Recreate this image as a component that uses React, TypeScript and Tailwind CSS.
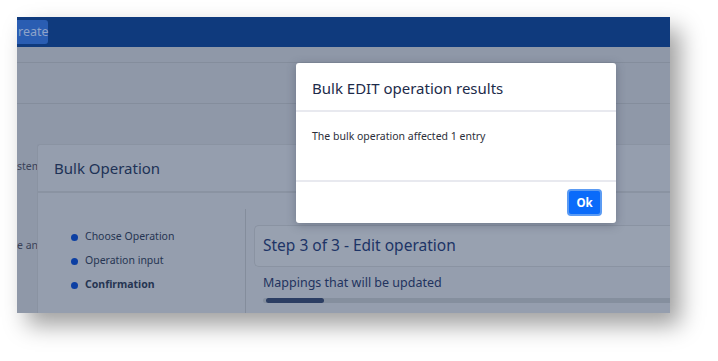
const steps = [
  { label: "Choose Operation", active: false },
  { label: "Operation input", active: false },
  { label: "Confirmation", active: true },
];

const ResultsModal = () => {
  return (
    <div className="absolute left-[279px] top-[46px] z-20 w-[320px] h-[160px] bg-white rounded-[3px] shadow-[0_2px_10px_rgba(40,50,70,0.35)] flex flex-col">
      <div className="h-[49px] flex items-center px-4 border-b-2 border-[#e8e9ef]">
        <h2 className="text-[15px] text-[#1d2b4a] mt-[3px]">Bulk EDIT operation results</h2>
      </div>
      <div className="h-[70px] px-4 pt-[17px] border-b-2 border-[#e8e9ef]">
        <p className="text-[10.5px] text-[#2c2f3a]">The bulk operation affected 1 entry</p>
      </div>
      <div className="flex-1 flex items-center justify-end pr-[14px]">
        <button className="w-[35px] h-[27px] rounded-[4px] bg-[#0a6bfa] border-2 border-[#5b9bf3] text-white text-[11.5px] font-bold">
          Ok
        </button>
      </div>
    </div>
  );
};

const BulkOperationCard = () => {
  return (
    <div className="relative z-10 ml-[20px] mt-[40px] flex-1 bg-[#959eae] border-l border-t border-[#8a93a2] rounded-tl-[3px] flex flex-col">
      <div className="h-[48px] flex items-center px-4 border-b-2 border-[#8a93a2]">
        <h3 className="text-[15px] text-[#203256]">Bulk Operation</h3>
      </div>
      <div className="flex flex-1">
        <div className="w-[207px] pt-[35px] pl-[33px] flex flex-col gap-[6px]">
          {steps.map((s) => (
            <div key={s.label} className="flex items-center h-[18px] gap-[7px]">
              <span className="w-[7px] h-[7px] rounded-full bg-[#0c3fa3]" />
              <span className={`text-[10.5px] text-[#263552] ${s.active ? "font-bold" : ""}`}>{s.label}</span>
            </div>
          ))}
        </div>
        <div className="w-px mt-[16px] bg-[#848d9c]" />
        <div className="flex-1 pl-[8px] pt-[32px]">
          <div className="h-[42px] border border-[#8a93a2] border-r-0 rounded-l-[5px] flex items-center pl-[8px] bg-[#98a1b0]">
            <span className="text-[15.5px] text-[#1d3466]">Step 3 of 3 - Edit operation</span>
          </div>
          <div className="pl-[9px] pt-[7px] text-[12.5px] text-[#22335e]">Mappings that will be updated</div>
          <div className="ml-[9px] mt-[5px] h-[5px] bg-[#858f9e] rounded-l-full relative">
            <div className="absolute left-[3px] top-0 h-[5px] w-[58px] rounded-full bg-[#2c3e63]" />
          </div>
        </div>
      </div>
    </div>
  );
};

const App = () => {
  return (
    <div className="w-[718px] h-[361px] bg-white pt-[17px] pl-[17px]" style={{ fontFamily: '"Noto Sans", "Open Sans", sans-serif' }}>
      <div className="relative w-[653px] h-[296px] overflow-hidden bg-[#8f98a8] shadow-[10px_12px_22px_rgba(0,0,0,0.38)] flex flex-col">
        <div className="h-[30px] bg-[#0f3a7d] flex items-center shrink-0">
          <div className="h-[24px] w-[31px] pl-[1px] rounded-r-[3px] bg-[#2a5db2] flex items-center text-[12.5px] text-[#8ea3c9]">
            reate
          </div>
        </div>
        <div className="h-[16px] border-b border-[#848d9c] shrink-0" />
        <div className="h-[41px] border-b border-[#848d9c] shrink-0" />
        <div className="flex flex-1 relative">
          <div className="absolute left-0 top-[55px] text-[10.5px] text-[#3a4258]">stem</div>
          <div className="absolute left-0 top-[134px] text-[10.5px] text-[#3a4258]">e an</div>
          <BulkOperationCard />
        </div>
        <ResultsModal />
      </div>
    </div>
  );
};

export default App;
